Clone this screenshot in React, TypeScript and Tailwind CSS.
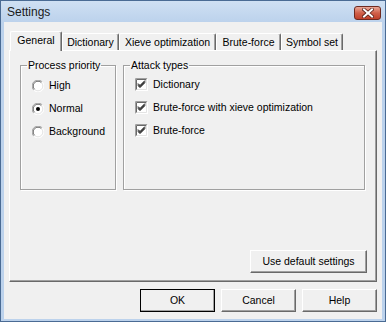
import React from 'react';

const font = { fontFamily: '"Liberation Sans", Arial, sans-serif' };

const btn =
  'h-[23px] bg-[#f0f0f0] text-[10.5px] text-black flex items-center justify-center border border-t-white border-l-white border-r-[#696969] border-b-[#696969] shadow-[inset_-1px_-1px_0_#a0a0a0]';

function Radio({ checked }: { checked?: boolean }) {
  return (
    <svg width="12" height="12" viewBox="0 0 12 12" className="shrink-0">
      <circle cx="6" cy="6" r="5.5" fill="#ffffff" />
      <path d="M1.8 10.2 A5.5 5.5 0 0 1 10.2 1.8" fill="none" stroke="#a0a0a0" strokeWidth="1" />
      <path d="M2.6 9.4 A4.5 4.5 0 0 1 9.4 2.6" fill="none" stroke="#696969" strokeWidth="1" />
      <path d="M10.2 1.8 A5.5 5.5 0 0 1 1.8 10.2" fill="none" stroke="#ffffff" strokeWidth="1" />
      <path d="M9.4 2.6 A4.5 4.5 0 0 1 2.6 9.4" fill="none" stroke="#e3e3e3" strokeWidth="1" />
      {checked && <circle cx="6" cy="6" r="2" fill="#000000" />}
    </svg>
  );
}

function Check() {
  return (
    <svg width="13" height="13" viewBox="0 0 13 13" className="shrink-0">
      <rect x="0" y="0" width="13" height="13" fill="#ffffff" />
      <path d="M0.5 12.5 V0.5 H12.5" fill="none" stroke="#a0a0a0" />
      <path d="M1.5 11.5 V1.5 H11.5" fill="none" stroke="#696969" />
      <path d="M1 12.5 H12.5 V0.5" fill="none" stroke="#ffffff" />
      <path d="M2 11.5 H11.5 V1.5" fill="none" stroke="#e3e3e3" />
      <path d="M3 5.5 L5 7.5 L10 2.5 M3 6.5 L5 8.5 L10 3.5 M3 7.5 L5 9.5 L10 4.5" fill="none" stroke="#000000" strokeWidth="1" />
    </svg>
  );
}

const tabs = [
  { label: 'General', w: 'w-[52px]', active: true },
  { label: 'Dictionary', w: 'w-[57px]' },
  { label: 'Xieve optimization', w: 'w-[97px]' },
  { label: 'Brute-force', w: 'w-[65px]' },
  { label: 'Symbol set', w: 'w-[62px]' },
];

export default function App() {
  return (
    <div className="w-[386px] h-[322px] flex flex-col border border-[#4a6b94] bg-[#bcd2ec] text-black" style={font}>
      {/* Title bar */}
      <div className="h-[21px] flex items-start bg-gradient-to-b from-[#cfe0f3] to-[#bcd2ec]">
        <span className="pl-[6px] pt-[4px] text-[12px] leading-[14px] text-[#1a1a1a]">Settings</span>
        <div className="ml-auto mr-[4px] mt-[5px] w-[27px] h-[14px] rounded-[3px] border border-[#6e2a20] bg-gradient-to-b from-[#e9a797] via-[#d0604a] to-[#c0402a] flex items-center justify-center">
          <svg width="12" height="10" viewBox="0 0 12 10">
            <path d="M2 1.5 L10 8.5 M10 1.5 L2 8.5" stroke="#5a2018" strokeWidth="3.6" strokeLinecap="square" />
            <path d="M2 1.5 L10 8.5 M10 1.5 L2 8.5" stroke="#ffffff" strokeWidth="2" strokeLinecap="square" />
          </svg>
        </div>
      </div>

      {/* Client area */}
      <div className="flex-1 mx-[3px] mb-[2px] bg-[#f0f0f0] flex flex-col">
        {/* Tab strip */}
        <div className="mt-[9px] ml-[6px] h-[19px] flex items-end">
          {tabs.map((t) => (
            <div
              key={t.label}
              className={`${t.w} ${
                t.active ? 'h-[20px] -mb-px relative z-10 pb-[3px]' : 'h-[17px]'
              } shrink-0 bg-[#f0f0f0] rounded-t-[2px] border-l border-t border-l-white border-t-white border-r border-r-[#696969] shadow-[inset_-1px_0_0_#a0a0a0] text-[10.5px] leading-[13px] whitespace-nowrap flex items-center justify-center`}
            >
              {t.label}
            </div>
          ))}
        </div>

        {/* Tab panel */}
        <div className="mx-[5px] h-[232px] border border-t-white border-l-white border-r-[#696969] border-b-[#696969] shadow-[inset_-1px_-1px_0_#a0a0a0] flex flex-col pt-[8px] pl-[10px] pr-[9px] pb-[8px]">
          <div className="flex gap-[7px]">
            <fieldset className="w-[96px] h-[131px] border border-[#a0a0a0] shadow-[1px_1px_0_#fff,inset_1px_1px_0_#fff] pl-[11px]">
              <legend className="ml-[-5px] px-[1px] text-[10.5px] leading-[13px] whitespace-nowrap">Process priority</legend>
              <div className="pt-[2px] flex flex-col text-[10.5px]">
                {[
                  { l: 'High' },
                  { l: 'Normal', c: true },
                  { l: 'Background' },
                ].map((r) => (
                  <div key={r.l} className="h-[23px] flex items-center gap-[5px]">
                    <Radio checked={r.c} />
                    <span>{r.l}</span>
                  </div>
                ))}
              </div>
            </fieldset>
            <fieldset className="w-[242px] h-[131px] border border-[#a0a0a0] shadow-[1px_1px_0_#fff,inset_1px_1px_0_#fff] pl-[11px]">
              <legend className="ml-[-5px] px-[1px] text-[10.5px] leading-[13px] whitespace-nowrap">Attack types</legend>
              <div className="pt-[1px] flex flex-col text-[10.5px]">
                {['Dictionary', 'Brute-force with xieve optimization', 'Brute-force'].map((l) => (
                  <div key={l} className="h-[23px] flex items-center gap-[5px]">
                    <Check />
                    <span>{l}</span>
                  </div>
                ))}
              </div>
            </fieldset>
          </div>
          <div className="mt-auto flex justify-end">
            <button className={`${btn} w-[117px]`}>Use default settings</button>
          </div>
        </div>

        {/* Dialog buttons */}
        <div className="mt-[7px] pr-[5px] flex justify-end gap-[6px]">
          <button className={`${btn} w-[75px] outline outline-1 outline-black -outline-offset-1`}>OK</button>
          <button className={`${btn} w-[75px]`}>Cancel</button>
          <button className={`${btn} w-[75px]`}>Help</button>
        </div>
      </div>
    </div>
  );
}
